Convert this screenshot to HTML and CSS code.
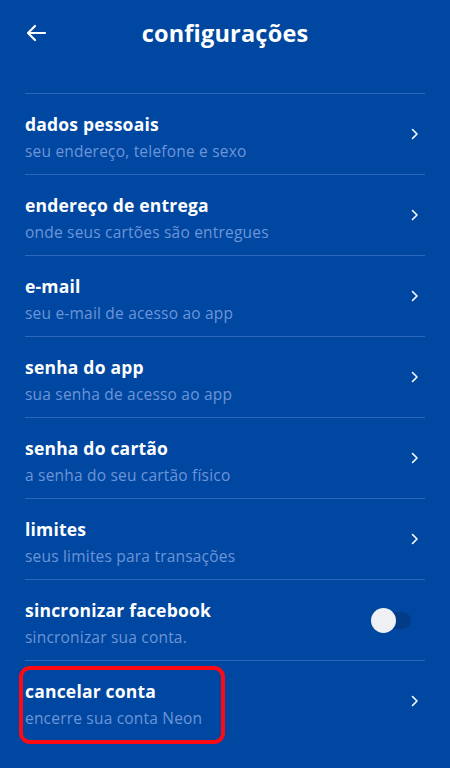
FILE: index.html
```html
<!DOCTYPE html>
<html lang="pt-BR">
<head>
  <meta charset="UTF-8">
  <title>configurações</title>
  <link rel="stylesheet" href="styles.css">
</head>
<body>
  <header class="topbar">
    <a href="#" class="back">
      <svg width="22" height="18" viewBox="0 0 22 18" fill="none" stroke="white" stroke-width="2.2" stroke-linecap="round" stroke-linejoin="round">
        <path d="M20 9H3M10 2L3 9l7 7"/>
      </svg>
    </a>
    <h1 class="title">configurações</h1>
    <span></span>
  </header>

  <ul class="settings">
    <li class="item">
      <div class="text">
        <div class="item-title">dados pessoais</div>
        <div class="item-sub">seu endereço, telefone e sexo</div>
      </div>
      <svg class="chev" width="8" height="12" viewBox="0 0 8 12"><path d="M1.5 1.5L6 6l-4.5 4.5"/></svg>
    </li>
    <li class="item">
      <div class="text">
        <div class="item-title">endereço de entrega</div>
        <div class="item-sub">onde seus cartões são entregues</div>
      </div>
      <svg class="chev" width="8" height="12" viewBox="0 0 8 12"><path d="M1.5 1.5L6 6l-4.5 4.5"/></svg>
    </li>
    <li class="item">
      <div class="text">
        <div class="item-title">e-mail</div>
        <div class="item-sub">seu e-mail de acesso ao app</div>
      </div>
      <svg class="chev" width="8" height="12" viewBox="0 0 8 12"><path d="M1.5 1.5L6 6l-4.5 4.5"/></svg>
    </li>
    <li class="item">
      <div class="text">
        <div class="item-title">senha do app</div>
        <div class="item-sub">sua senha de acesso ao app</div>
      </div>
      <svg class="chev" width="8" height="12" viewBox="0 0 8 12"><path d="M1.5 1.5L6 6l-4.5 4.5"/></svg>
    </li>
    <li class="item">
      <div class="text">
        <div class="item-title">senha do cartão</div>
        <div class="item-sub">a senha do seu cartão físico</div>
      </div>
      <svg class="chev" width="8" height="12" viewBox="0 0 8 12"><path d="M1.5 1.5L6 6l-4.5 4.5"/></svg>
    </li>
    <li class="item">
      <div class="text">
        <div class="item-title">limites</div>
        <div class="item-sub">seus limites para transações</div>
      </div>
      <svg class="chev" width="8" height="12" viewBox="0 0 8 12"><path d="M1.5 1.5L6 6l-4.5 4.5"/></svg>
    </li>
    <li class="item">
      <div class="text">
        <div class="item-title">sincronizar facebook</div>
        <div class="item-sub">sincronizar sua conta.</div>
      </div>
      <div class="toggle"><span class="knob"></span></div>
    </li>
    <li class="item highlight">
      <div class="text">
        <div class="item-title">cancelar conta</div>
        <div class="item-sub">encerre sua conta Neon</div>
      </div>
      <svg class="chev" width="8" height="12" viewBox="0 0 8 12"><path d="M1.5 1.5L6 6l-4.5 4.5"/></svg>
      <span class="mark"></span>
    </li>
  </ul>
</body>
</html>
```

FILE: styles.css
```css
* {
  margin: 0;
  padding: 0;
  box-sizing: border-box;
  font-family: 'Open Sans', sans-serif;
}
body {
  background: #0047a1;
  color: white;
  height: 768px;
  overflow: hidden;
}
.topbar {
  display: grid;
  grid-template-columns: 1fr auto 1fr;
  align-items: center;
  height: 66px;
  padding: 0 25px;
}
.back {
  display: flex;
  align-items: center;
}
.title {
  font-size: 23.5px;
  font-weight: 700;
  letter-spacing: 0.2px;
}
.settings {
  list-style: none;
  margin: 27px 25px 0;
}
.item {
  position: relative;
  display: flex;
  align-items: center;
  justify-content: space-between;
  border-top: 1px solid #2d67bd;
  padding: 19px 6px 14px 0;
  height: 81px;
}
.item-title {
  font-size: 17.5px;
  font-weight: 700;
  line-height: 22px;
  letter-spacing: 0.2px;
}
.item-sub {
  font-size: 15.5px;
  line-height: 20px;
  margin-top: 6px;
  letter-spacing: 0.2px;
  color: #6c95d8;
}
.chev {
  fill: none;
  stroke: white;
  stroke-width: 1.6;
  stroke-linecap: round;
  stroke-linejoin: round;
  margin-bottom: 6px;
}
.toggle {
  position: relative;
  width: 38px;
  height: 17px;
  border-radius: 9px;
  background: #023b87;
  margin-right: 8px;
  margin-top: -4px;
}
.knob {
  position: absolute;
  left: -2px;
  top: -4px;
  width: 25px;
  height: 25px;
  border-radius: 50%;
  background: #eef0f4;
}
.mark {
  position: absolute;
  left: -6px;
  top: 5px;
  width: 206px;
  height: 78px;
  border: 4px solid #ff0a14;
  border-radius: 11px;
}
```
